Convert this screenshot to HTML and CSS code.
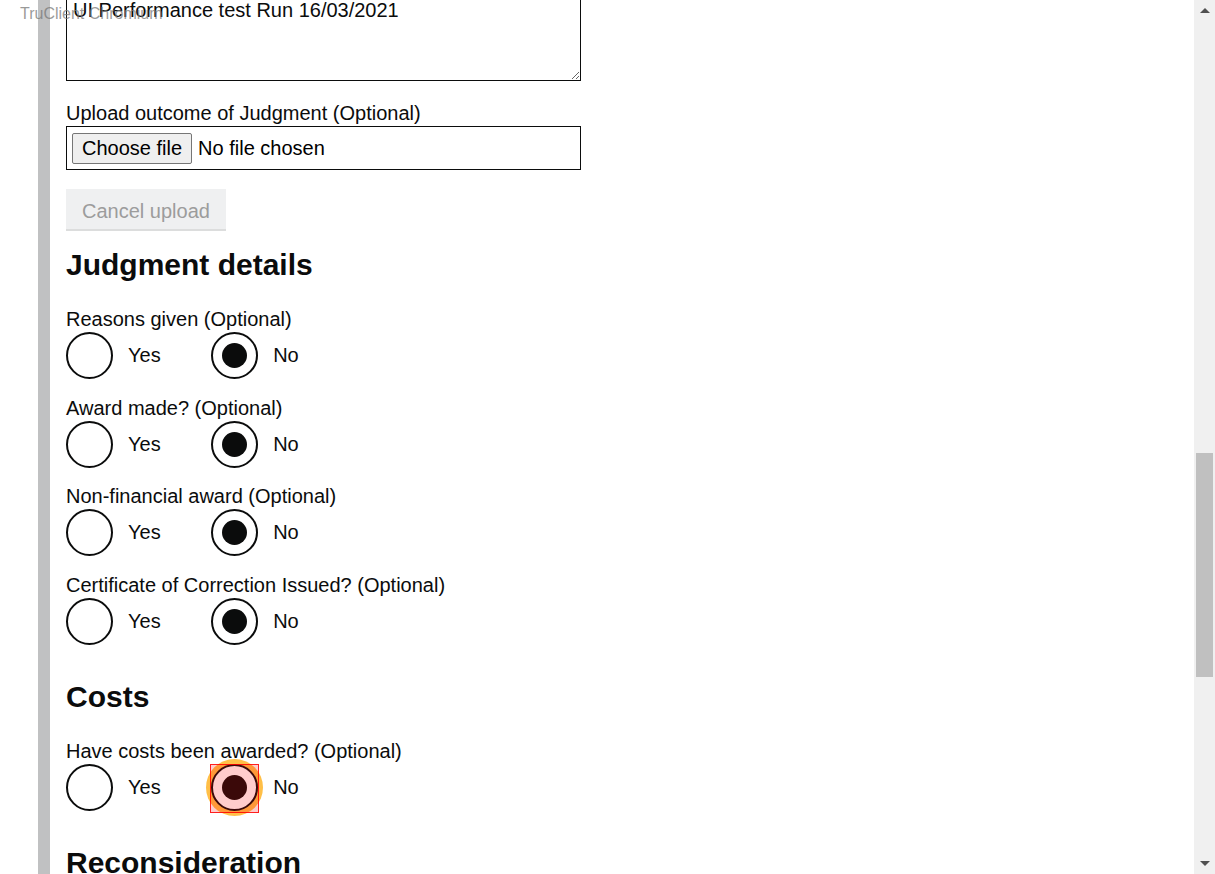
FILE: index.html
```html
<!DOCTYPE html>
<html lang="en">
<head>
<meta charset="utf-8">
<title>Judgment details</title>
<link rel="stylesheet" href="styles.css">
</head>
<body>
<div class="watermark">TruClient Chromium</div>
<div class="viewport">
  <div class="page">
    <div class="rail"></div>
    <main class="content">
      <textarea class="textarea" aria-label="Notes">UI Performance test Run 16/03/2021</textarea>

      <div class="upload-group">
        <label class="label">Upload outcome of Judgment (Optional)</label>
        <div class="file-box">
          <span class="file-button">Choose file</span>
          <span class="file-status">No file chosen</span>
        </div>
      </div>

      <button class="cancel-button" type="button" disabled>Cancel upload</button>

      <h2 class="heading">Judgment details</h2>

      <div class="form-group">
        <div class="label">Reasons given (Optional)</div>
        <div class="radios">
          <label class="radio-item"><span class="radio-mark"></span><span class="radio-text">Yes</span></label>
          <label class="radio-item"><span class="radio-mark is-checked"></span><span class="radio-text">No</span></label>
        </div>
      </div>

      <div class="form-group">
        <div class="label">Award made? (Optional)</div>
        <div class="radios">
          <label class="radio-item"><span class="radio-mark"></span><span class="radio-text">Yes</span></label>
          <label class="radio-item"><span class="radio-mark is-checked"></span><span class="radio-text">No</span></label>
        </div>
      </div>

      <div class="form-group">
        <div class="label">Non-financial award (Optional)</div>
        <div class="radios">
          <label class="radio-item"><span class="radio-mark"></span><span class="radio-text">Yes</span></label>
          <label class="radio-item"><span class="radio-mark is-checked"></span><span class="radio-text">No</span></label>
        </div>
      </div>

      <div class="form-group">
        <div class="label">Certificate of Correction Issued? (Optional)</div>
        <div class="radios">
          <label class="radio-item"><span class="radio-mark"></span><span class="radio-text">Yes</span></label>
          <label class="radio-item"><span class="radio-mark is-checked"></span><span class="radio-text">No</span></label>
        </div>
      </div>

      <h2 class="heading heading-after-group">Costs</h2>

      <div class="form-group">
        <div class="label">Have costs been awarded? (Optional)</div>
        <div class="radios">
          <label class="radio-item"><span class="radio-mark"></span><span class="radio-text">Yes</span></label>
          <label class="radio-item"><span class="radio-mark is-checked is-focused"><span class="highlight"></span></span><span class="radio-text">No</span></label>
        </div>
      </div>

      <h2 class="heading heading-after-group">Reconsideration</h2>
    </main>
  </div>
  <div class="scrollbar">
    <div class="scroll-arrow"><span class="arrow-up"></span></div>
    <div class="scroll-track"><div class="scroll-thumb"></div></div>
    <div class="scroll-arrow"><span class="arrow-down"></span></div>
  </div>
</div>
</body>
</html>
```

FILE: styles.css
```css
html, body {
  margin: 0;
  padding: 0;
  background: #ffffff;
}

body {
  font-family: "Liberation Sans", Arial, sans-serif;
  color: #0b0c0c;
  font-size: 20px;
  line-height: 25px;
  overflow: hidden;
}

.watermark {
  position: absolute;
  top: 4px;
  left: 20px;
  z-index: 5;
  font-size: 16px;
  line-height: 20px;
  color: rgba(120, 120, 120, 0.75);
  pointer-events: none;
}

.viewport {
  display: flex;
  height: 874px;
  overflow: hidden;
}

.page {
  flex: 1;
  display: flex;
  padding-left: 38px;
  overflow: hidden;
}

.rail {
  width: 12px;
  flex-shrink: 0;
  background: #c0c1c2;
}

.content {
  padding-left: 16px;
  width: 515px;
}

.textarea {
  display: block;
  box-sizing: border-box;
  width: 515px;
  height: 89px;
  margin: -8px 0 0 0;
  padding: 5px 6px;
  border: 1px solid #0b0c0c;
  border-radius: 0;
  font-family: inherit;
  font-size: 20px;
  line-height: 25px;
  color: #0b0c0c;
  background: #fff;
  resize: both;
}

.upload-group {
  margin-top: 20px;
}

.label {
  display: block;
  font-size: 20px;
  line-height: 25px;
}

.file-box {
  box-sizing: border-box;
  display: flex;
  align-items: center;
  width: 515px;
  height: 44px;
  padding: 0 5px;
  border: 1px solid #0b0c0c;
}

.file-button {
  box-sizing: border-box;
  height: 31px;
  padding: 0 9px;
  display: flex;
  align-items: center;
  background: #efefef;
  border: 1px solid #767676;
  border-radius: 2px;
  color: #000;
  margin-right: 6px;
}

.file-status {
  color: #000;
}

.cancel-button {
  display: block;
  box-sizing: border-box;
  margin-top: 19px;
  width: 160px;
  height: 40px;
  padding: 4px 16px 0 16px;
  border: 0;
  background: #eff0f1;
  box-shadow: 0 2px 0 #dcdddd;
  color: #9c9c9c;
  font-family: inherit;
  font-size: 20px;
  line-height: 25px;
  text-align: left;
  white-space: nowrap;
}

.heading {
  margin: 18px 0 24px 0;
  font-size: 30px;
  line-height: 36px;
  font-weight: 700;
}

.heading-after-group {
  margin-top: 34px;
}

.form-group {
  margin-bottom: 16.5px;
}

.radios {
  display: flex;
  align-items: center;
}

.radio-item {
  display: flex;
  align-items: center;
  gap: 15px;
  margin-right: 50.5px;
}

.radio-mark {
  position: relative;
  box-sizing: border-box;
  width: 47px;
  height: 47px;
  border: 2px solid #0b0c0c;
  border-radius: 50%;
  background: #fff;
  flex-shrink: 0;
}

.radio-mark.is-checked::after {
  content: "";
  position: absolute;
  left: 9px;
  top: 9px;
  width: 25px;
  height: 25px;
  border-radius: 50%;
  background: #0b0c0c;
}

.radio-mark.is-focused {
  box-shadow: 0 0 0 5px #ffbf47;
}

.highlight {
  position: absolute;
  left: -3px;
  top: -2px;
  width: 49px;
  height: 49px;
  box-sizing: border-box;
  border: 1px solid rgba(255, 0, 0, 0.85);
  background: rgba(255, 0, 0, 0.2);
  z-index: 2;
}

.scrollbar {
  width: 21px;
  flex-shrink: 0;
  display: flex;
  flex-direction: column;
  background: #f0f0f0;
}

.scroll-arrow {
  height: 21px;
  display: flex;
  align-items: center;
  justify-content: center;
}

.arrow-up {
  width: 0;
  height: 0;
  border-left: 5px solid transparent;
  border-right: 5px solid transparent;
  border-bottom: 5px solid #505050;
}

.arrow-down {
  width: 0;
  height: 0;
  border-left: 5px solid transparent;
  border-right: 5px solid transparent;
  border-top: 5px solid #505050;
}

.scroll-track {
  flex: 1;
  padding: 0 2px;
}

.scroll-thumb {
  margin-top: 432px;
  height: 224px;
  background: #c0c0c0;
}
```
